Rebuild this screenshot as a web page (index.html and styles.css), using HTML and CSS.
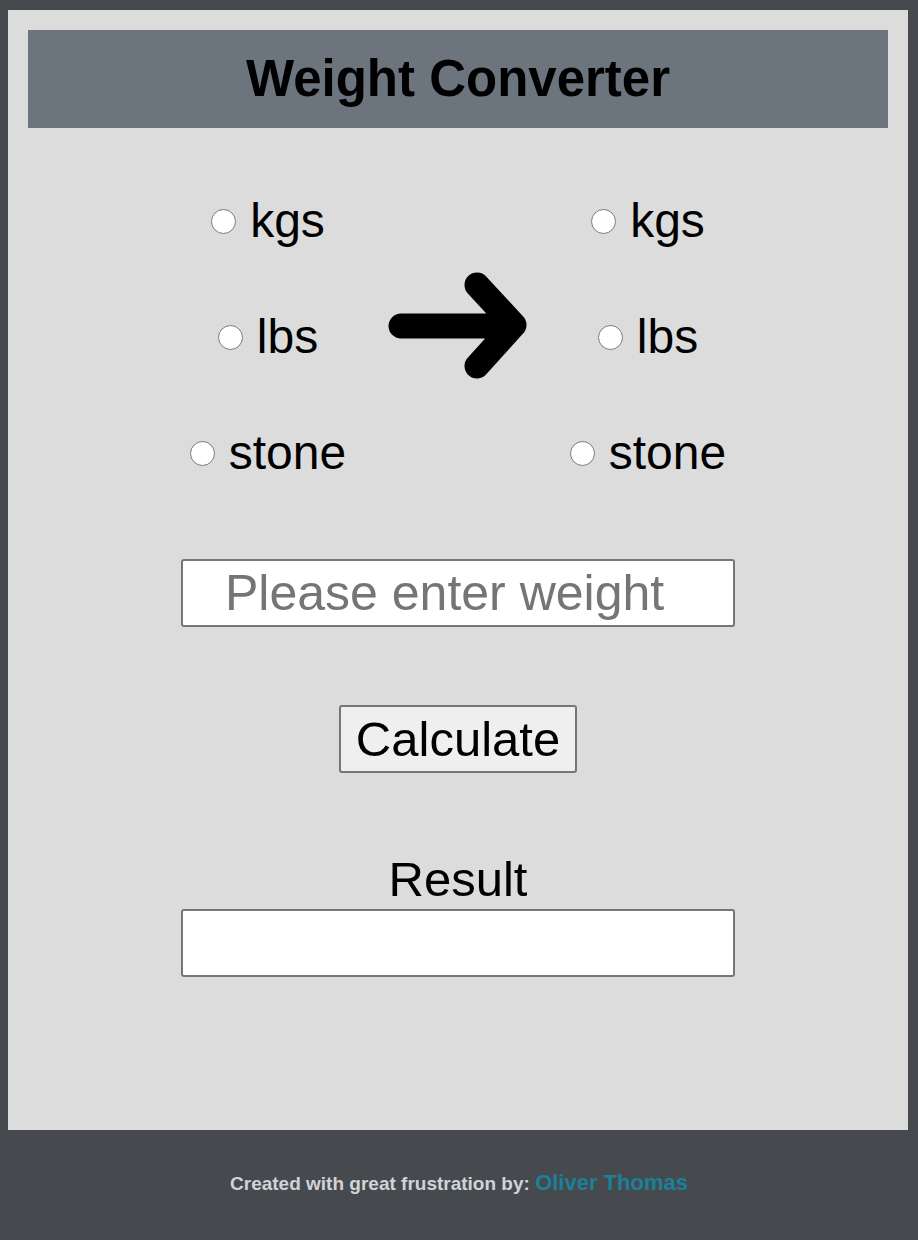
FILE: index.html
```html
<!DOCTYPE html>
<html lang="en">
<head>
    <meta charset="UTF-8">
    <meta name="viewport" content="width=device-width, initial-scale=1.0">
    <title>Weight Converter</title>
    <link rel="stylesheet" href="styles.css">
</head>
<body>
    <div class="container">
        <header class="title-bar">
            <h1>Weight Converter</h1>
        </header>

        <div class="units">
            <div class="unit-col">
                <label class="unit-row"><input type="radio" name="from" value="kgs"> kgs</label>
                <label class="unit-row"><input type="radio" name="from" value="lbs"> lbs</label>
                <label class="unit-row"><input type="radio" name="from" value="stone"> stone</label>
            </div>
            <div class="arrow-col">
                <svg class="arrow" width="140" height="112" viewBox="0 0 140 112">
                    <path d="M 13 56 H 124 M 89 15 L 126 55 L 89 96" fill="none" stroke="#000" stroke-width="25" stroke-linecap="round" stroke-linejoin="round"/>
                </svg>
            </div>
            <div class="unit-col">
                <label class="unit-row"><input type="radio" name="to" value="kgs"> kgs</label>
                <label class="unit-row"><input type="radio" name="to" value="lbs"> lbs</label>
                <label class="unit-row"><input type="radio" name="to" value="stone"> stone</label>
            </div>
        </div>

        <input type="text" class="weight-input" id="weight" placeholder="Please enter weight">
        <button class="calc-btn" id="calc">Calculate</button>

        <div class="result-label">Result</div>
        <input type="text" class="result-box" id="result" readonly>
    </div>

    <footer class="footer">
        <p>Created with great frustration by: <a href="#">Oliver Thomas</a></p>
    </footer>
</body>
</html>
```

FILE: styles.css
```css
/* Global styles */
* {
    box-sizing: border-box;
}

body {
    margin: 0;
    background: #464a4e;
    font-family: 'Liberation Sans', Arial, sans-serif;
    color: #000;
}

.container {
    margin: 10px 10px 0 8px;
    padding: 20px 20px 153px;
    background: #dcdcdc;
}

.title-bar {
    background: #6c757d;
    height: 98px;
}

.title-bar h1 {
    margin: 0;
    text-align: center;
    font-size: 51px;
    line-height: 98px;
    font-weight: bold;
}

/* unit pickers */
.units {
    display: flex;
    justify-content: center;
    margin-top: 34px;
}

.unit-col {
    width: 190px;
    display: flex;
    flex-direction: column;
}

.unit-row {
    height: 116px;
    display: flex;
    align-items: center;
    justify-content: center;
    gap: 14px;
    font-size: 48px;
}

.unit-row input {
    width: 25px;
    height: 25px;
    margin: 2px 0 0;
}

.arrow-col {
    width: 190px;
    display: flex;
    align-items: center;
    justify-content: center;
}

.arrow {
    display: block;
    margin-top: -21px;
}

/* inputs */
.weight-input,
.result-box {
    display: block;
    width: 554px;
    height: 68px;
    margin: 49px auto 0;
    padding: 0 0 0 42px;
    font-family: 'Liberation Sans', Arial, sans-serif;
    font-size: 50px;
    border: 2px solid #767676;
    border-radius: 3px;
    background: #fff;
}

.weight-input::placeholder {
    color: #757575;
}

.calc-btn {
    display: block;
    margin: 78px auto 0;
    width: 238px;
    height: 68px;
    padding: 0;
    font-family: 'Liberation Sans', Arial, sans-serif;
    font-size: 49px;
    color: #000;
    background: #efefef;
    border: 2px solid #767676;
    border-radius: 3px;
}

.result-label {
    margin-top: 79px;
    text-align: center;
    font-size: 49px;
    line-height: 55px;
}

.result-box {
    margin-top: 2px;
}

.footer {
    height: 110px;
    display: flex;
    align-items: center;
    justify-content: center;
    padding-bottom: 4px;
}

.footer p {
    margin: 0;
    color: #d0d4d8;
    font-weight: bold;
    font-size: 19px;
}

.footer a {
    color: #1b8098;
    font-size: 22px;
    text-decoration: none;
}
```
